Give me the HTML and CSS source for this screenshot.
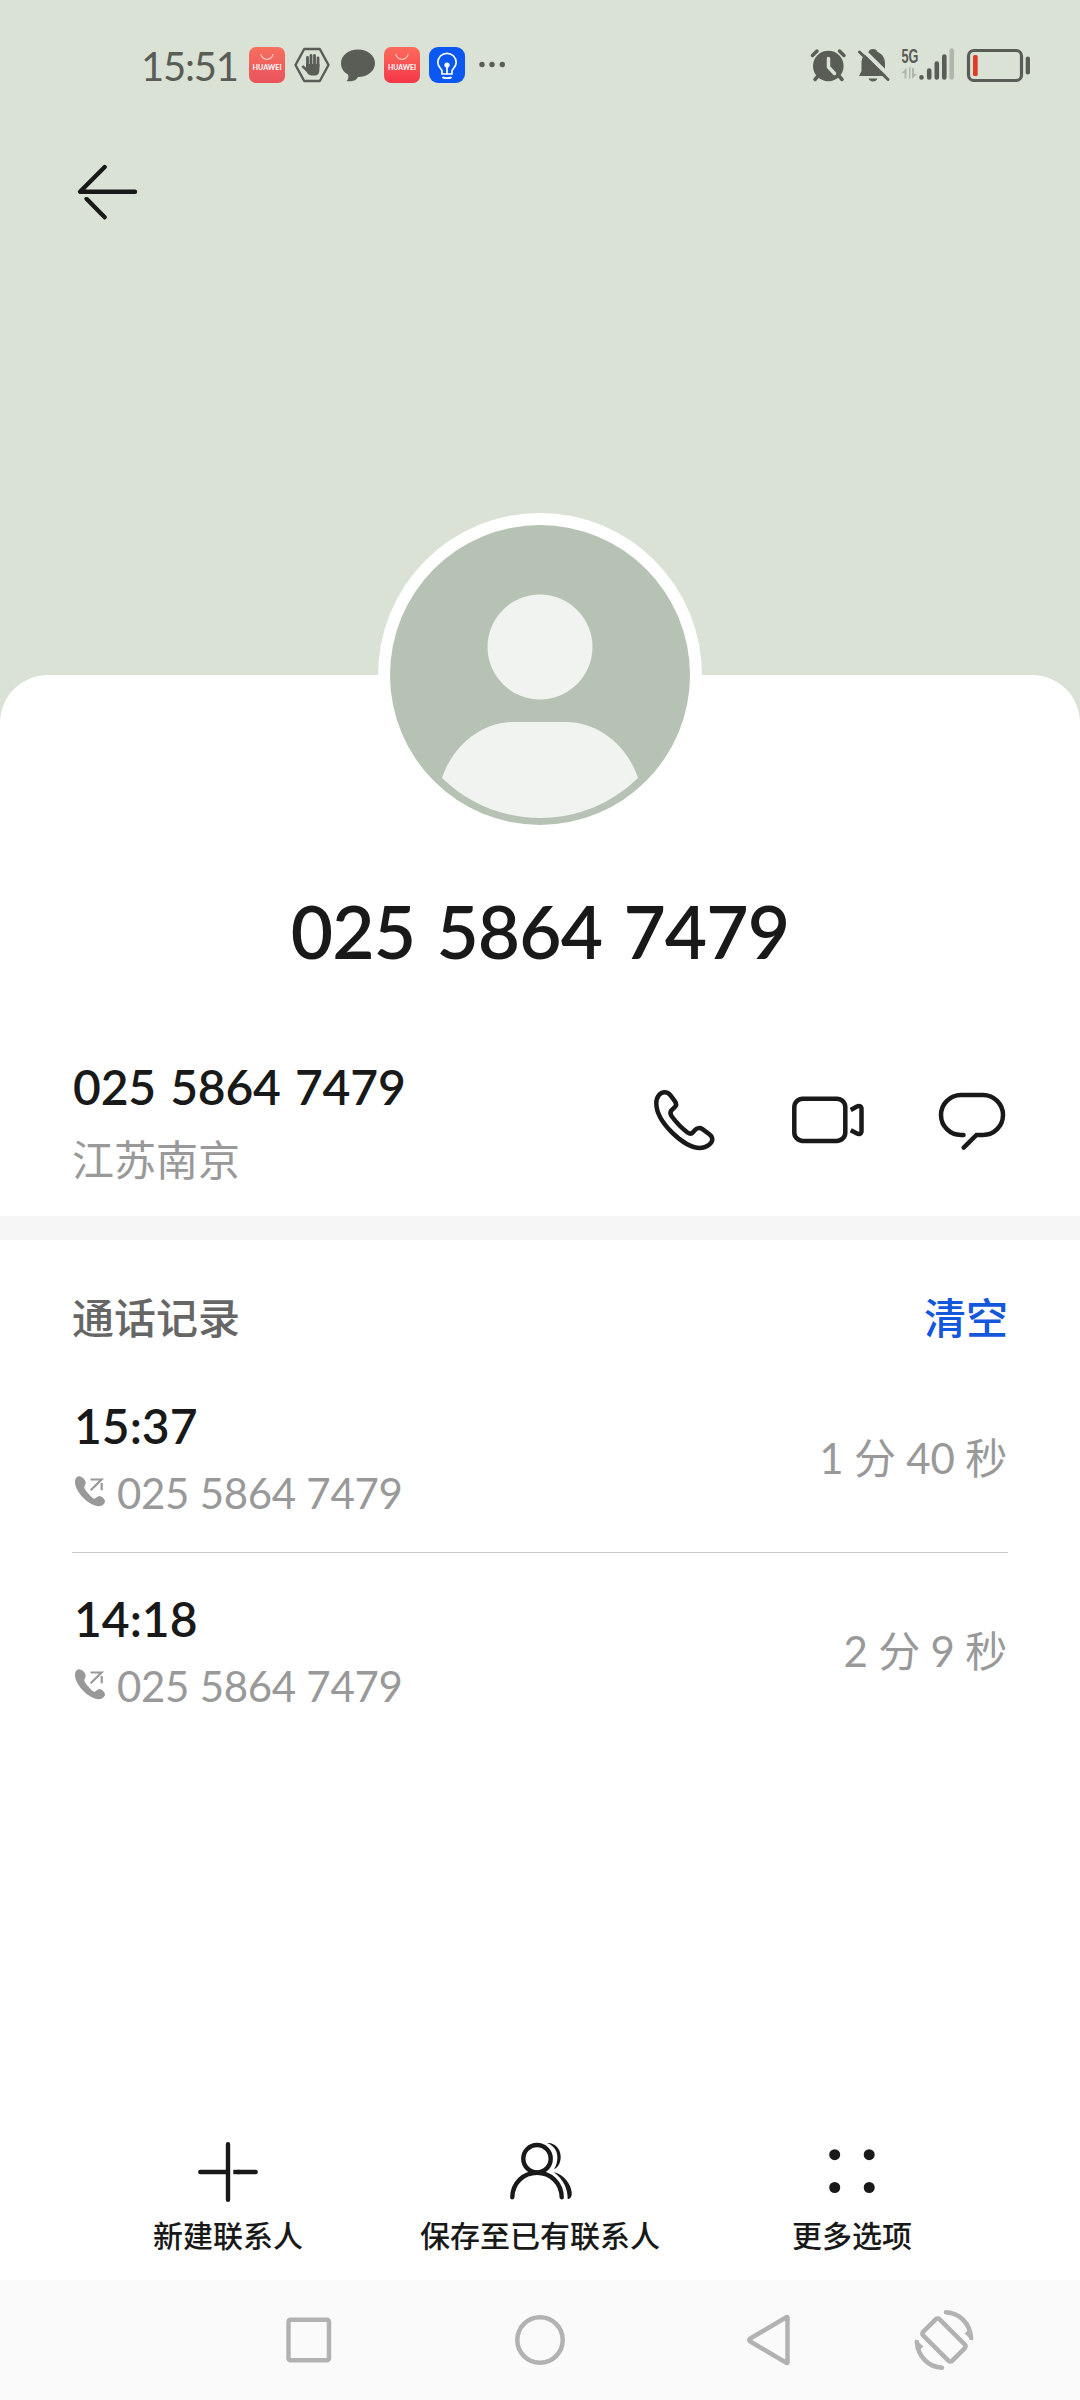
FILE: index.html
```html
<!DOCTYPE html>
<html lang="zh-CN">
<head>
    <meta charset="UTF-8">
    <title>025 5864 7479</title>
    <link rel="stylesheet" href="styles.css">
</head>
<body>
    <div class="phone">
        <header class="hero">
            <div class="status-bar">
                <span class="clock">15:51</span>
                <div class="notifications">
                    <svg width="36" height="36" viewBox="0 0 36 36">
                        <defs>
                            <linearGradient id="red" x1="0" y1="0" x2="0" y2="1">
                                <stop offset="0" stop-color="#f6705f"/>
                                <stop offset="1" stop-color="#ea525c"/>
                            </linearGradient>
                            <linearGradient id="red2" x1="0" y1="0" x2="0" y2="1">
                                <stop offset="0" stop-color="#fd6b5b"/>
                                <stop offset="1" stop-color="#f5374a"/>
                            </linearGradient>
                        </defs>
                        <rect width="36" height="36" rx="7" fill="url(#red)"/>
                        <path d="M12 7a6 5.3 0 0 0 12 0" fill="none" stroke="#fbc8c0" stroke-width="1.2"/>
                        <text x="3.5" y="23.3" class="brand" textLength="29" lengthAdjust="spacingAndGlyphs">HUAWEI</text>
                    </svg>
                    <svg width="36" height="36" viewBox="0 0 36 36">
                        <path d="M10.2 2h15.6L34.5 18l-8.7 16H10.2L1.5 18z" fill="none" stroke="#595d56" stroke-width="2.4" stroke-linejoin="round"/>
                        <path d="M13.5 20V10.5M17 19V8.5M20.500 19V8.500M24 20V11" stroke="#595d56" stroke-width="2.800" stroke-linecap="round"/>
                        <path d="M12.100 17h13.300v6c0 3-1.500 5.500-4 5.500h-4c-2.500 0-4-2-5.400-4.200L8 20.500c-.8-1.500 1-2.700 2.300-1.500l1.800 1.700z" fill="#595d56"/>
                    </svg>
                    <svg width="36" height="36" viewBox="0 0 36 36">
                        <path d="M19 2.500c9.500 0 17 6 17 13.700S28.500 30 19 30c-3 5-8 4.500-11.500 4 2-1.500 2.300-4 1.500-6.500C4.500 25 2 21 2 16.200 2 8.500 9.500 2.500 19 2.500z" fill="#595d56"/>
                    </svg>
                    <svg width="36" height="36" viewBox="0 0 36 36">
                        <rect width="36" height="36" rx="7" fill="url(#red2)"/>
                        <path d="M12 7a6 5.300 0 0 0 12 0" fill="none" stroke="#fdc8c0" stroke-width="1.200"/>
                        <text x="4" y="23.300" class="brand" textLength="28" lengthAdjust="spacingAndGlyphs">HUAWEI</text>
                    </svg>
                    <svg width="36" height="36" viewBox="0 0 36 36">
                        <rect width="36" height="36" rx="9" fill="#0b57f2"/>
                        <g fill="none" stroke="#fff" stroke-width="1.700">
                            <path d="M13 27v-3c0-2-4.200-4-4.200-8.500a9.200 9.200 0 0 1 18.400 0C27.200 20 23 22 23 24v3z"/>
                            <path d="M13.500 30c1 1.500 8 1.500 9 0M18 17v10"/>
                        </g>
                        <circle cx="18" cy="18" r="2.600" fill="#fff"/>
                    </svg>
                    <svg width="36" height="36" viewBox="0 0 36 36" fill="#595d56">
                        <circle cx="8" cy="17.500" r="2.700"/>
                        <circle cx="18" cy="17.500" r="2.700"/>
                        <circle cx="28.300" cy="17.500" r="2.700"/>
                    </svg>
                </div>
                <div class="indicators">
                    <svg width="36" height="36" viewBox="0 0 36 36">
                        <circle cx="18.300" cy="19" r="15.300" fill="#595d56"/>
                        <path d="M2.500 8.500L7 4M34 8.500L29.500 4M8 29l-3 3.500M29 29l3 3.500" stroke="#595d56" stroke-width="3.500" stroke-linecap="round"/>
                        <path d="M18.500 11.500V20l6 6.500" fill="none" stroke="#dae2d6" stroke-width="3.500" stroke-linecap="round"/>
                    </svg>
                    <svg width="36" height="36" viewBox="0 0 36 36">
                        <path d="M18 2c2.500 0 4 1.200 4.500 3 4.500 1.500 7.500 6 7.500 11v8L33 29H4l2.500-5v-8C6.500 11 9 7 13.500 5 14 3.200 15.500 2 18 2zM13.500 31.500h9c-.8 2-2.500 3-4.500 3s-3.700-1-4.500-3z" fill="#595d56"/>
                        <path d="M7 2l28 27.500" stroke="#dae2d6" stroke-width="4"/>
                        <path d="M4.500 5L33 32.500" stroke="#595d56" stroke-width="3" stroke-linecap="round"/>
                    </svg>
                    <svg width="57" height="36" viewBox="0 0 57 36">
                        <text x="1.500" y="15.800" class="network" textLength="17" lengthAdjust="spacingAndGlyphs">5G</text>
                        <path d="M1.500 26l5-5v10.500H4.500V26zM9 21l1.500-1.500V31.500H9zM12 21h2v6h3l-5 5z" fill="#b0b6ac"/>
                        <g stroke="#595d56" stroke-width="4.600" stroke-linecap="round">
                            <path d="M21.500 30.200v.3M29.200 23.500v7M36.800 16.500v14M44.300 9.500v21"/>
                            <path d="M51.700 3.500v27" stroke="#b0b6ac"/>
                        </g>
                    </svg>
                    <svg width="66" height="36" viewBox="0 0 66 36">
                        <rect x="2.500" y="3.500" width="53" height="30" rx="5.500" fill="none" stroke="#595d56" stroke-width="3.200"/>
                        <rect x="7" y="8" width="4.700" height="21" rx="1.500" fill="#e03d28"/>
                        <rect x="59.700" y="9.500" width="4.300" height="18" rx="2.100" fill="#595d56"/>
                    </svg>
                </div>
            </div>
            <svg class="back" width="72" height="72" viewBox="0 0 72 72">
                <path d="M32.700 11L8 35.800H63" stroke-linejoin="round"/>
                <path d="M14.500 42.800L32.700 61.300"/>
                <path d="M10 39.300h10v1.800h-10z" fill="#dae2d6" stroke="none"/>
            </svg>
        </header>

        <main class="sheet">
            <div class="avatar">
                <svg width="300" height="300" viewBox="0 0 300 300">
                    <circle cx="150" cy="150" r="150" fill="#b6c2b3"/>
                    <circle cx="150" cy="122" r="52.500" fill="#f0f3ef"/>
                    <path d="M124 197h52c32 0 61 23 72 56-26 25-60 40-98 40s-72-15-98-40c11-33 40-56 72-56z" fill="#f0f3ef"/>
                </svg>
            </div>
            <h1 class="name">025 5864 7479</h1>

            <section class="contact">
                <div>
                    <div class="number">025 5864 7479</div>
                    <div class="location">江苏南京</div>
                </div>
                <div class="actions">
                    <svg width="72" height="72" viewBox="0 0 72 72">
                        <path d="M16.700 8.300C12 8.300 8.300 13 8.300 19.300 8.300 38 36 64 52 64c7 0 12.300-5 12.300-8.700 0-2.300-1.300-3.800-3.300-5.300l-6.500-4.800c-2.500-1.700-5.500-1.400-7.500.8l-2 2.300c-1.500 1.700-3.500 1.700-5.500.2-6-4.500-12-11-16-16.500-1.500-2.500-1.500-4 0-5.700l3-2.800c2-2 1.800-4.500.5-6.200l-4.500-6c-1.500-2-3.500-3-5.800-3z"/>
                    </svg>
                    <svg width="72" height="72" viewBox="0 0 72 72">
                        <rect x="2.300" y="14.700" width="51" height="42.200" rx="8.500"/>
                        <path d="M58.700 26l5.800-3.200c3-1.500 5-.5 5 2.500v21.500c0 3-2 4-5 2.500l-5.800-3" stroke-linecap="butt"/>
                    </svg>
                    <svg width="72" height="72" viewBox="0 0 72 72">
                        <path d="M27.500 51H25a20 20 0 0 1 0-40h22a20 20 0 0 1 0 40h-6.500L27.700 63.700"/>
                    </svg>
                </div>
            </section>

            <section class="history">
                <div class="history-head">
                    <h2>通话记录</h2>
                    <a class="clear">清空</a>
                </div>
                <div class="call">
                    <div>
                        <div class="time">15:37</div>
                        <div class="caller">
                            <svg width="36" height="36" viewBox="0 0 36 36">
                                <path d="M7.300 3.200C4.500 3.200 3 5.700 3 9c0 10 14 24.200 24 24.200 3.500 0 6-2.700 6-4.900S29.500 23 27.500 23s-3.700 2.500-5 2.800c-1.500.2-10.200-8.800-10.200-11.300 0-1.700 1.400-2.500 1.400-5S10 3.200 7.300 3.200z" fill="#999"/>
                                <path d="M18.500 6.500h11L18.700 17.200M29.700 10v7.300" fill="none" stroke="#999" stroke-width="2.200"/>
                            </svg>
                            025 5864 7479
                        </div>
                    </div>
                    <div class="duration">1 分 40 秒</div>
                </div>
                <div class="call">
                    <div>
                        <div class="time">14:18</div>
                        <div class="caller">
                            <svg width="36" height="36" viewBox="0 0 36 36">
                                <path d="M7.300 3.200C4.500 3.200 3 5.700 3 9c0 10 14 24.200 24 24.200 3.500 0 6-2.700 6-4.900S29.500 23 27.500 23s-3.700 2.500-5 2.800c-1.500.2-10.200-8.800-10.200-11.300 0-1.700 1.400-2.500 1.400-5S10 3.200 7.300 3.200z" fill="#999"/>
                                <path d="M18.500 6.500h11L18.700 17.200M29.700 10v7.300" fill="none" stroke="#999" stroke-width="2.200"/>
                            </svg>
                            025 5864 7479
                        </div>
                    </div>
                    <div class="duration">2 分 9 秒</div>
                </div>
            </section>

            <div class="toolbar">
                <div class="tool">
                    <svg width="72" height="72" viewBox="0 0 72 72">
                        <path d="M36 8.300v55.500M8.300 36H36"/>
                        <path d="M41.300 36h6" stroke-linecap="butt"/>
                        <path d="M46 36h17.700"/>
                    </svg>
                    <span>新建联系人</span>
                </div>
                <div class="tool">
                    <svg width="72" height="72" viewBox="0 0 72 72">
                        <circle cx="33" cy="22.700" r="13.700"/>
                        <path d="M8.300 61.300C8.600 47 19.500 36.800 33 36.800S57.400 47 57.700 61.300"/>
                        <g fill="#191919" stroke="none">
                            <path d="M43 7c8-.8 13.700 6 13.700 13.700 0 6-2.700 11-6.700 12.600 3.300-5 4.500-12.300 2.300-17.800C50.500 11 47 8.500 43 7z"/>
                            <path d="M49.700 36c10 2.500 17.300 12 18 20.500.3 4-1 6.500-4 6.500 0-10-4-19.500-14-27z"/>
                        </g>
                    </svg>
                    <span>保存至已有联系人</span>
                </div>
                <div class="tool">
                    <svg width="72" height="72" viewBox="0 0 72 72">
                        <g fill="#191919" stroke="none">
                            <circle cx="18.700" cy="18.700" r="5.500"/>
                            <circle cx="53.200" cy="18.700" r="5.500"/>
                            <circle cx="18.700" cy="51.500" r="5.500"/>
                            <circle cx="53.200" cy="51.500" r="5.500"/>
                        </g>
                    </svg>
                    <span>更多选项</span>
                </div>
            </div>
        </main>

        <nav class="nav-bar">
            <svg class="recents" width="60" height="60" viewBox="0 0 60 60">
                <rect x="9.500" y="9.700" width="40.500" height="40.500" rx="2"/>
            </svg>
            <svg class="home" width="60" height="60" viewBox="0 0 60 60">
                <circle cx="30" cy="30" r="22.700"/>
            </svg>
            <svg class="return" width="60" height="60" viewBox="0 0 60 60">
                <path d="M49.500 7.500v45c0 .6-.4.600-.8.400L12.300 31.500c-1.300-.8-1.300-2.200 0-3L48.700 7.100c.4-.2.800-.2.800.4z"/>
            </svg>
            <svg class="rotate" width="60" height="60" viewBox="0 0 60 60">
                <rect x="9.500" y="18.500" width="41" height="23" rx="2.500" transform="rotate(45 30 30)"/>
                <path d="M32 2.300C46 3 56 14 57.200 28M28 57.700C14 57 4 46 2.800 32" stroke-linecap="round"/>
                <path d="M50.500 23.500L55.500 19 59.300 31zM9.500 36.500L4.500 41 .7 29z" fill="#b2b2b2" stroke="none"/>
            </svg>
        </nav>
    </div>
</body>
</html>
```
FILE: styles.css
```css
* {
    box-sizing: border-box;
}
body {
    margin: 0;
    font-family: Lato, "Noto Sans CJK SC", sans-serif;
    color: #191919;
    background: #dae2d6;
}
svg {
    display: block;
    flex: none;
    overflow: visible;
}
.phone {
    width: 1080px;
    height: 2400px;
    display: flex;
    flex-direction: column;
    background: #dae2d6;
}

/* header */
.hero {
    height: 675px;
    flex: none;
}
.status-bar {
    display: flex;
    align-items: center;
    height: 130px;
    padding: 0 48px 0 141px;
}
.clock {
    width: 108px;
    padding-top: 2px;
    font-size: 40px;
    line-height: 48px;
    color: #595d56;
    letter-spacing: -1.2px;
}
.notifications,
.indicators {
    display: flex;
    gap: 9px;
}
.indicators {
    margin-left: auto;
}
.brand {
    font-size: 6.5px;
    font-weight: 700;
    fill: #fff;
}
.network {
    font-family: "Liberation Sans", sans-serif;
    font-size: 20px;
    font-weight: 700;
    fill: #595d56;
}
.back {
    margin: 26px 0 0 72px;
    fill: none;
    stroke: #191919;
    stroke-width: 4.4;
    stroke-linecap: round;
}

/* contact card */
.sheet {
    flex: 1;
    display: flex;
    flex-direction: column;
    background: #fff;
    border-radius: 48px 48px 0 0;
}
.avatar {
    width: 324px;
    margin: -162px auto 0;
    padding: 12px;
    background: #fff;
    border-radius: 50%;
}
.name {
    margin: 50px 0 0;
    font-size: 73px;
    line-height: 88px;
    font-weight: 600;
    text-align: center;
    letter-spacing: -0.9px;
    word-spacing: 4px;
}
.contact {
    display: flex;
    justify-content: space-between;
    margin-top: 83px;
    padding: 0 72px 31px;
    border-bottom: 24px solid #f6f6f6;
    box-sizing: content-box;
}
.number {
    padding-left: 1px;
    font-size: 48px;
    line-height: 58px;
    font-weight: 600;
    letter-spacing: -0.2px;
    word-spacing: 2.5px;
}
.location {
    margin-top: 19px;
    font-size: 42px;
    line-height: 50px;
    color: #999;
}
.actions {
    display: flex;
    gap: 72px;
    margin-top: 26px;
    fill: none;
    stroke: #191919;
    stroke-width: 4.5;
    stroke-linecap: round;
}

/* call log */
.history {
    padding: 53px 72px 0;
}
.history-head {
    display: flex;
    justify-content: space-between;
    margin-bottom: 17px;
    line-height: 50px;
    font-size: 42px;
    font-weight: 500;
}
.history-head h2 {
    margin: 0;
    font-size: 42px;
    font-weight: 500;
    color: #666;
}
.clear {
    color: #1257dc;
}
.call {
    display: flex;
    justify-content: space-between;
    align-items: center;
    height: 193px;
    padding: 37px 0 34px;
    border-bottom: 1px solid #ccc;
}
.call:last-child {
    border-bottom-color: transparent;
}
.time {
    padding-left: 2px;
    font-size: 48px;
    line-height: 58px;
    font-weight: 600;
}
.caller {
    display: flex;
    gap: 9px;
    margin-top: 13px;
    font-size: 42px;
    line-height: 50px;
    color: #999;
    letter-spacing: -0.3px;
}
.caller svg {
    margin-top: 5px;
}
.duration {
    padding-right: 1px;
    font-size: 42px;
    line-height: 50px;
    color: #999;
    letter-spacing: -0.2px;
}

/* bottom actions */
.toolbar {
    display: grid;
    grid-template-columns: repeat(3, 1fr);
    margin-top: auto;
    padding: 0 72px 27px;
}
.tool {
    display: flex;
    flex-direction: column;
    align-items: center;
    gap: 9px;
    font-size: 30px;
    line-height: 36px;
    font-weight: 500;
    white-space: nowrap;
}
.tool svg {
    fill: none;
    stroke: #191919;
    stroke-width: 4.4;
    stroke-linecap: round;
}

.nav-bar {
    display: flex;
    align-items: flex-start;
    height: 120px;
    flex: none;
    padding: 30px 0 0 279px;
    background: #fafafa;
    fill: none;
    stroke: #b2b2b2;
    stroke-width: 4.5;
}
.home {
    margin-left: 171px;
}
.return {
    margin-left: 168px;
}
.rotate {
    margin-left: 116px;
}
```
